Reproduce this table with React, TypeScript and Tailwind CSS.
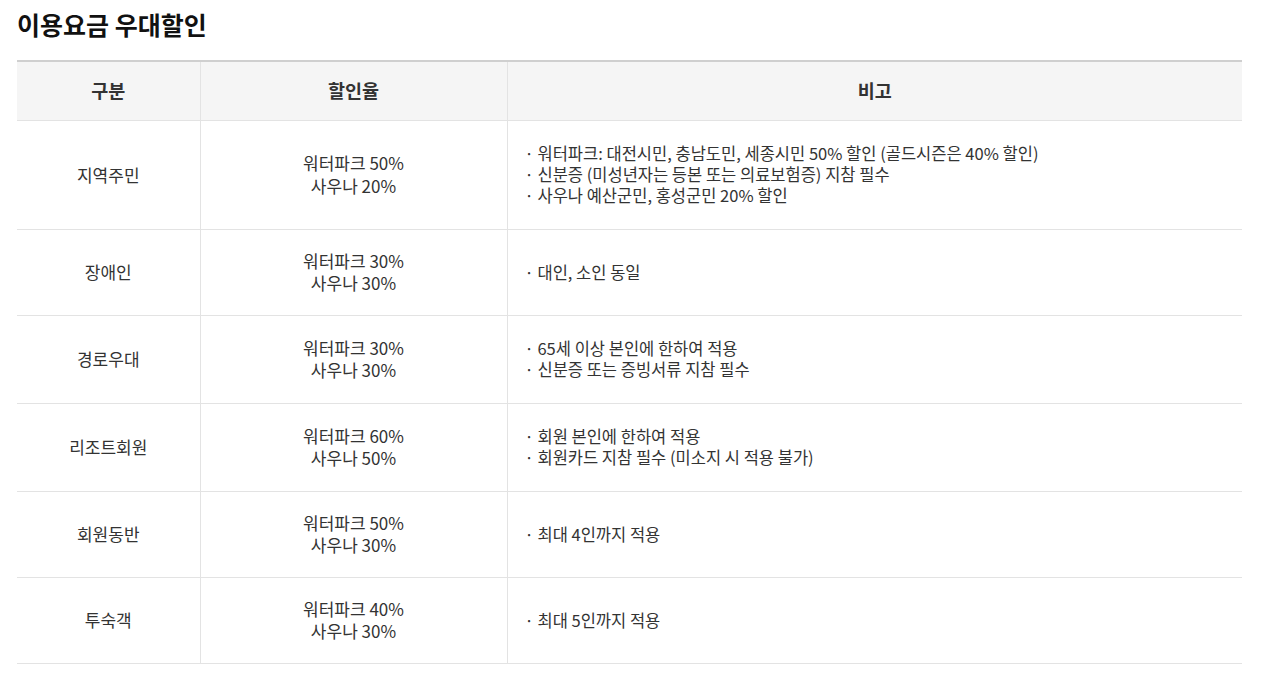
const rows = [
  {
    label: "지역주민",
    rate: ["워터파크 50%", "사우나 20%"],
    notes: [
      "워터파크: 대전시민, 충남도민, 세종시민 50% 할인 (골드시즌은 40% 할인)",
      "신분증 (미성년자는 등본 또는 의료보험증) 지참 필수",
      "사우나 예산군민, 홍성군민 20% 할인",
    ],
  },
  { label: "장애인", rate: ["워터파크 30%", "사우나 30%"], notes: ["대인, 소인 동일"] },
  {
    label: "경로우대",
    rate: ["워터파크 30%", "사우나 30%"],
    notes: ["65세 이상 본인에 한하여 적용", "신분증 또는 증빙서류 지참 필수"],
  },
  {
    label: "리조트회원",
    rate: ["워터파크 60%", "사우나 50%"],
    notes: ["회원 본인에 한하여 적용", "회원카드 지참 필수 (미소지 시 적용 불가)"],
  },
  { label: "회원동반", rate: ["워터파크 50%", "사우나 30%"], notes: ["최대 4인까지 적용"] },
  { label: "투숙객", rate: ["워터파크 40%", "사우나 30%"], notes: ["최대 5인까지 적용"] },
];

export default function App() {
  return (
    <div
      className="bg-white px-[17px] pt-[8px] text-[#333]"
      style={{ fontFamily: '"Noto Sans CJK KR", "Noto Sans", sans-serif' }}
    >
      <h2 className="text-[25px] font-bold leading-[32px] text-[#111]">이용요금 우대할인</h2>
      <table className="mt-[20px] w-[1225px] border-collapse border-t-2 border-[#cfcfcf]">
        <thead>
          <tr className="bg-[#f5f5f5] border-b border-[#e3e3e3]">
            <th className="w-[183px] h-[59px] font-bold text-[18.5px] text-[#333] border-r border-[#e3e3e3]">구분</th>
            <th className="w-[307px] font-bold text-[18.5px] text-[#333] border-r border-[#e3e3e3]">할인율</th>
            <th className="font-bold text-[18.5px] text-[#333]">비고</th>
          </tr>
        </thead>
        <tbody>
          {rows.map((r) => (
            <tr key={r.label} className="border-b border-[#e3e3e3]">
              <td className="text-center text-[17px] border-r border-[#e3e3e3] py-[20px] leading-[22px]">{r.label}</td>
              <td className="text-center text-[17px] border-r border-[#e3e3e3] py-[20px] leading-[22.5px]">
                {r.rate.map((t) => (
                  <div key={t}>{t}</div>
                ))}
              </td>
              <td className="pl-[17px] text-[16.5px] py-[22.5px] leading-[21px]">
                {r.notes.map((n) => (
                  <div key={n}>· {n}</div>
                ))}
              </td>
            </tr>
          ))}
        </tbody>
      </table>
    </div>
  );
}
